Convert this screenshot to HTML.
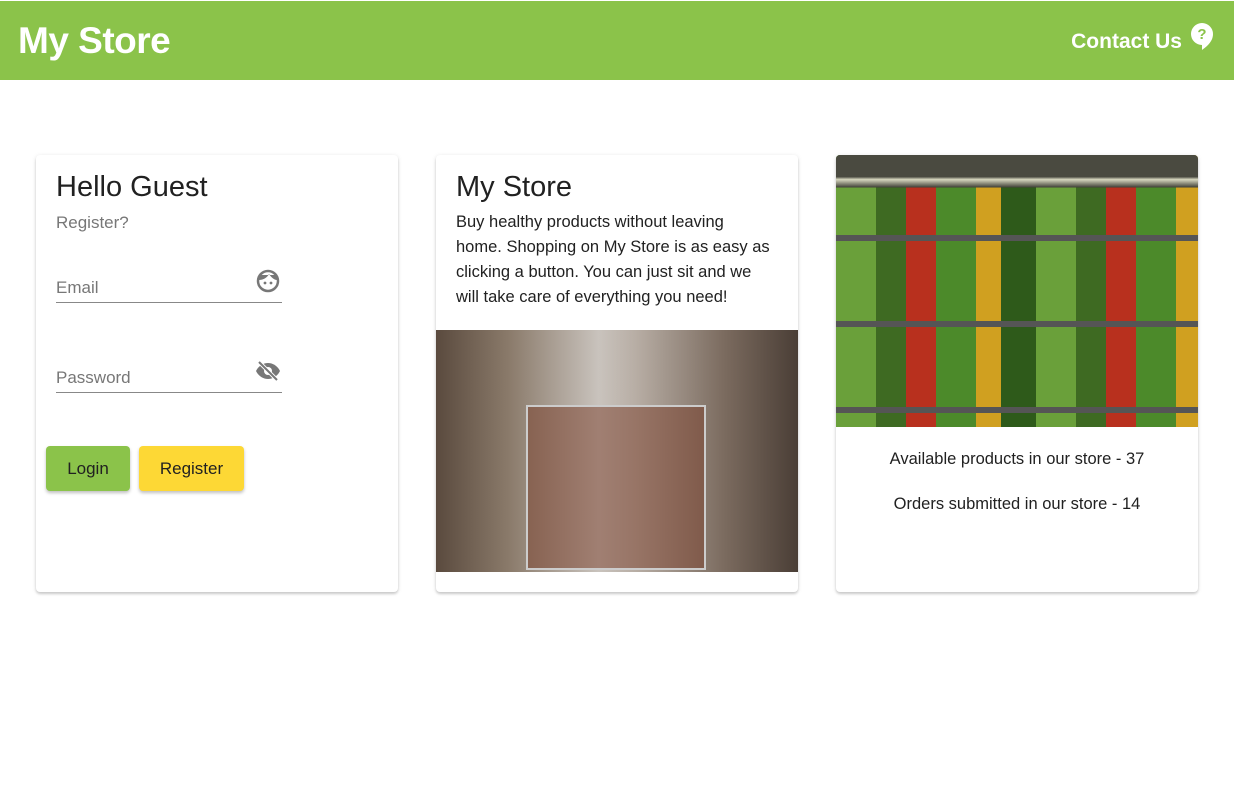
<!DOCTYPE html>
<html><head><style>
*{box-sizing:border-box;margin:0;padding:0}
body{width:1240px;height:794px;background:#fff;font-family:"Liberation Sans",sans-serif;position:relative;overflow:hidden;color:#212121}
.hdr{position:absolute;left:0;top:1px;width:1234px;height:79px;background:#8bc34a}
.hdr h1{position:absolute;left:18px;top:19px;font-size:37px;font-weight:bold;color:#fff;letter-spacing:-0.5px}
.hdr .c{position:absolute;right:52px;top:29px;font-size:21px;font-weight:bold;color:#fff}
.card{position:absolute;top:155px;width:362px;height:437px;background:#fff;border-radius:4px;box-shadow:0 2px 2px rgba(0,0,0,.14),0 1px 5px rgba(0,0,0,.12)}
.t{position:absolute;left:20px;top:16px;font-size:29px;color:#212121;font-weight:500}
.in{position:absolute;left:20px;width:226px;border-bottom:1px solid #888;font-size:17px;color:#777;height:32px}
.btn{position:absolute;top:291px;height:45px;border-radius:4px;font-size:17px;text-align:center;line-height:45px;box-shadow:0 2px 3px rgba(0,0,0,.25)}
.p{font-size:16.5px;line-height:25px}
</style></head><body>
<div class="hdr"><h1>My Store</h1><div class="c">Contact Us</div>
<svg style="position:absolute;left:1190px;top:21px" width="24" height="28" viewBox="0 0 24 28"><path d="M12 1a11 11 0 1 0 0 22v5c4-3 11-8 11-16A11 11 0 0 0 12 1z" fill="#fff"/><text x="12" y="17" font-size="15" font-weight="bold" fill="#8bc34a" text-anchor="middle" font-family="Liberation Sans">?</text></svg></div>

<div class="card" style="left:36px">
<div class="t">Hello Guest</div>
<div style="position:absolute;left:20px;top:58px;font-size:17px;color:#777">Register?</div>
<div class="in" style="top:116px;padding-top:7px">Email</div>
<svg style="position:absolute;left:220px;top:114px" width="24" height="24" viewBox="0 0 24 24"><circle cx="12" cy="12" r="10" fill="#fff" stroke="#777" stroke-width="2.5"/><path d="M3 11c4 0 8-2 10-6 2 3 5 6 8 6V6H3z" fill="#777"/><circle cx="9" cy="14" r="1.4" fill="#777"/><circle cx="15" cy="14" r="1.4" fill="#777"/></svg>
<div class="in" style="top:206px;padding-top:7px">Password</div>
<svg style="position:absolute;left:219px;top:204px" width="26" height="24" viewBox="0 0 26 24"><path d="M1 12c3-6 8-8 12-8s9 2 12 8c-3 6-8 8-12 8S4 18 1 12z" fill="#777"/><circle cx="13" cy="12" r="4" fill="#fff"/><path d="M4 3l18 18" stroke="#fff" stroke-width="4"/><path d="M4 3l18 18" stroke="#777" stroke-width="2"/></svg>
<div class="btn" style="left:10px;width:84px;background:#8bc34a">Login</div>
<div class="btn" style="left:103px;width:105px;background:#fdd835">Register</div>
</div>

<div class="card" style="left:436px">
<div class="t">My Store</div>
<div class="p" style="position:absolute;left:20px;top:55px;width:318px">Buy healthy products without leaving home. Shopping on My Store is as easy as clicking a button. You can just sit and we will take care of everything you need!</div>
<div style="position:absolute;left:0;top:175px;width:362px;height:242px;background:linear-gradient(90deg,#5a4a3e 0%,#8a7a6a 20%,#c9c3bd 45%,#b8aea5 55%,#7a6a5e 80%,#4a3e36 100%)">
<div style="position:absolute;left:90px;top:75px;width:180px;height:165px;border:2px solid #ccc;background:rgba(120,60,40,.5)"></div></div>
</div>

<div class="card" style="left:836px;overflow:hidden">
<div style="position:absolute;left:0;top:0;width:362px;height:272px;background:
linear-gradient(#4a4a40 0,#4a4a40 8%,#d8d8c0 9%,#3a3a32 12%,transparent 12%),
repeating-linear-gradient(#0000 0 80px,#555 80px 86px),
repeating-linear-gradient(90deg,#6aa03a 0 40px,#3e6a22 40px 70px,#b8301e 70px 100px,#4c8a2a 100px 140px,#d0a020 140px 165px,#2e5a1a 165px 200px),#3a5a28"></div>
<div class="p" style="position:absolute;left:0;width:362px;top:292px;text-align:center">Available products in our store - 37</div>
<div class="p" style="position:absolute;left:0;width:362px;top:337px;text-align:center">Orders submitted in our store - 14</div>
</div>
</body></html>
